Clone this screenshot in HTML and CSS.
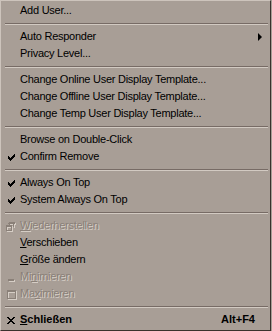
FILE: index.html
```html
<!DOCTYPE html>
<html lang="de">
<head>
    <meta charset="UTF-8">
    <title>Menu</title>
    <link rel="stylesheet" href="styles.css">
</head>
<body>
    <div class="menu">
        <div class="item"><span class="mark"></span><span class="label">Add User...</span></div>
        <div class="sep"></div>

        <div class="item"><span class="mark"></span><span class="label">Auto Responder</span><span class="arrow"></span></div>
        <div class="item"><span class="mark"></span><span class="label">Privacy Level...</span></div>
        <div class="sep"></div>

        <div class="item"><span class="mark"></span><span class="label">Change Online User Display Template...</span></div>
        <div class="item"><span class="mark"></span><span class="label">Change Offline User Display Template...</span></div>
        <div class="item"><span class="mark"></span><span class="label">Change Temp User Display Template...</span></div>
        <div class="sep"></div>

        <div class="item"><span class="mark"></span><span class="label">Browse on Double-Click</span></div>
        <div class="item">
            <span class="mark">
                <svg width="7" height="7" viewBox="0 0 7 7" shape-rendering="crispEdges"><path d="M6 0h1v1h-1zM5 1h2v1h-2zM0 2h1v1h-1zM4 2h3v1h-3zM0 3h2v1h-2zM3 3h3v1h-3zM0 4h5v1h-5zM1 5h3v1h-3zM2 6h1v1h-1z" fill="#000"/></svg>
            </span>
            <span class="label">Confirm Remove</span>
        </div>
        <div class="sep"></div>

        <div class="item">
            <span class="mark">
                <svg width="7" height="7" viewBox="0 0 7 7" shape-rendering="crispEdges"><path d="M6 0h1v1h-1zM5 1h2v1h-2zM0 2h1v1h-1zM4 2h3v1h-3zM0 3h2v1h-2zM3 3h3v1h-3zM0 4h5v1h-5zM1 5h3v1h-3zM2 6h1v1h-1z" fill="#000"/></svg>
            </span>
            <span class="label">Always On Top</span>
        </div>
        <div class="item">
            <span class="mark">
                <svg width="7" height="7" viewBox="0 0 7 7" shape-rendering="crispEdges"><path d="M6 0h1v1h-1zM5 1h2v1h-2zM0 2h1v1h-1zM4 2h3v1h-3zM0 3h2v1h-2zM3 3h3v1h-3zM0 4h5v1h-5zM1 5h3v1h-3zM2 6h1v1h-1z" fill="#000"/></svg>
            </span>
            <span class="label">System Always On Top</span>
        </div>
        <div class="sep"></div>

        <!-- window system menu -->
        <div class="item disabled">
            <span class="mark">
                <svg class="emboss" width="10" height="9" viewBox="0 0 10 9" shape-rendering="crispEdges">
                    <path d="M3 0h6v2h-1v3h-1v-3h-5zM3 2h1v1h-1zM0 3h6v2h-5v3h4v-3h1v4h-6z" fill="#8a8078"/>
                </svg>
            </span>
            <span class="label"><u>W</u>iederherstellen</span>
        </div>
        <div class="item"><span class="mark"></span><span class="label"><u>V</u>erschieben</span></div>
        <div class="item"><span class="mark"></span><span class="label"><u>G</u>röße ändern</span></div>
        <div class="item disabled">
            <span class="mark">
                <svg class="emboss" width="8" height="9" viewBox="0 0 8 9" shape-rendering="crispEdges">
                    <path d="M1 6h6v2h-6z" fill="#8a8078"/>
                </svg>
            </span>
            <span class="label">Mi<u>n</u>imieren</span>
        </div>
        <div class="item disabled">
            <span class="mark">
                <svg class="emboss" width="9" height="9" viewBox="0 0 9 9" shape-rendering="crispEdges">
                    <path d="M0 0h9v2h-8v6h7v-6h1v7h-9z" fill="#8a8078"/>
                </svg>
            </span>
            <span class="label">Ma<u>x</u>imieren</span>
        </div>
        <div class="sep"></div>

        <div class="item bold">
            <span class="mark">
                <svg width="8" height="7" viewBox="0 0 8 7" shape-rendering="crispEdges">
                    <path d="M0 0h2v1h-2zM6 0h2v1h-2zM1 1h2v1h-2zM5 1h2v1h-2zM2 2h4v1h-4zM3 3h2v1h-2zM2 4h4v1h-4zM1 5h2v1h-2zM5 5h2v1h-2zM0 6h2v1h-2zM6 6h2v1h-2z" fill="#000"/>
                </svg>
            </span>
            <span class="label"><u>S</u>chließen</span>
            <span class="shortcut">Alt+F4</span>
        </div>
    </div>
</body>
</html>
```

FILE: styles.css
```css
/* Global Styles */
body {
    margin: 0;
    background-color: #a89e96;
    font-family: "Liberation Sans", Arial, sans-serif;
    font-size: 11px;
    letter-spacing: -0.25px;
    color: #000;
}

/* Menu frame */
.menu {
    width: 271px;
    height: 331px;
    box-sizing: border-box;
    padding: 1px 1px 2px 1px;
    background-color: #a89e96;
    border-left: 1px solid #cdc4bc;
    border-top: 1px solid #cdc4bc;
    border-right: 1px solid #3a322e;
    border-bottom: 1px solid #3a322e;
}

/* Menu rows */
.item {
    display: flex;
    align-items: center;
    height: 17px;
    line-height: 15px;
    padding-top: 1px;
    padding-bottom: 1px;
    box-sizing: border-box;
    white-space: nowrap;
}

.mark {
    width: 18px;
    flex: none;
    display: flex;
    justify-content: center;
    align-items: center;
    padding-top: 2px;
    box-sizing: border-box;
}

.mark svg {
    display: block;
}

.label {
    flex: 1;
}

.label u {
    text-decoration-thickness: 1px;
    text-underline-offset: 1px;
}

.arrow {
    width: 0;
    height: 0;
    margin-right: 7px;
    margin-top: 1px;
    border-top: 4px solid transparent;
    border-bottom: 4px solid transparent;
    border-left: 4px solid #000;
}

.shortcut {
    margin-right: 14px;
}

.bold {
    font-weight: bold;
    letter-spacing: 0;
}

.disabled {
    color: #8a8078;
    text-shadow: 1px 1px 0 #d6cec6;
}

.emboss {
    filter: drop-shadow(1px 1px 0 #d6cec6);
}

/* Separator */
.sep {
    height: 2px;
    box-sizing: border-box;
    margin: 4px 1px 3px 3px;
    border-top: 1px solid #776b65;
    border-bottom: 1px solid #d2cac2;
}
```
